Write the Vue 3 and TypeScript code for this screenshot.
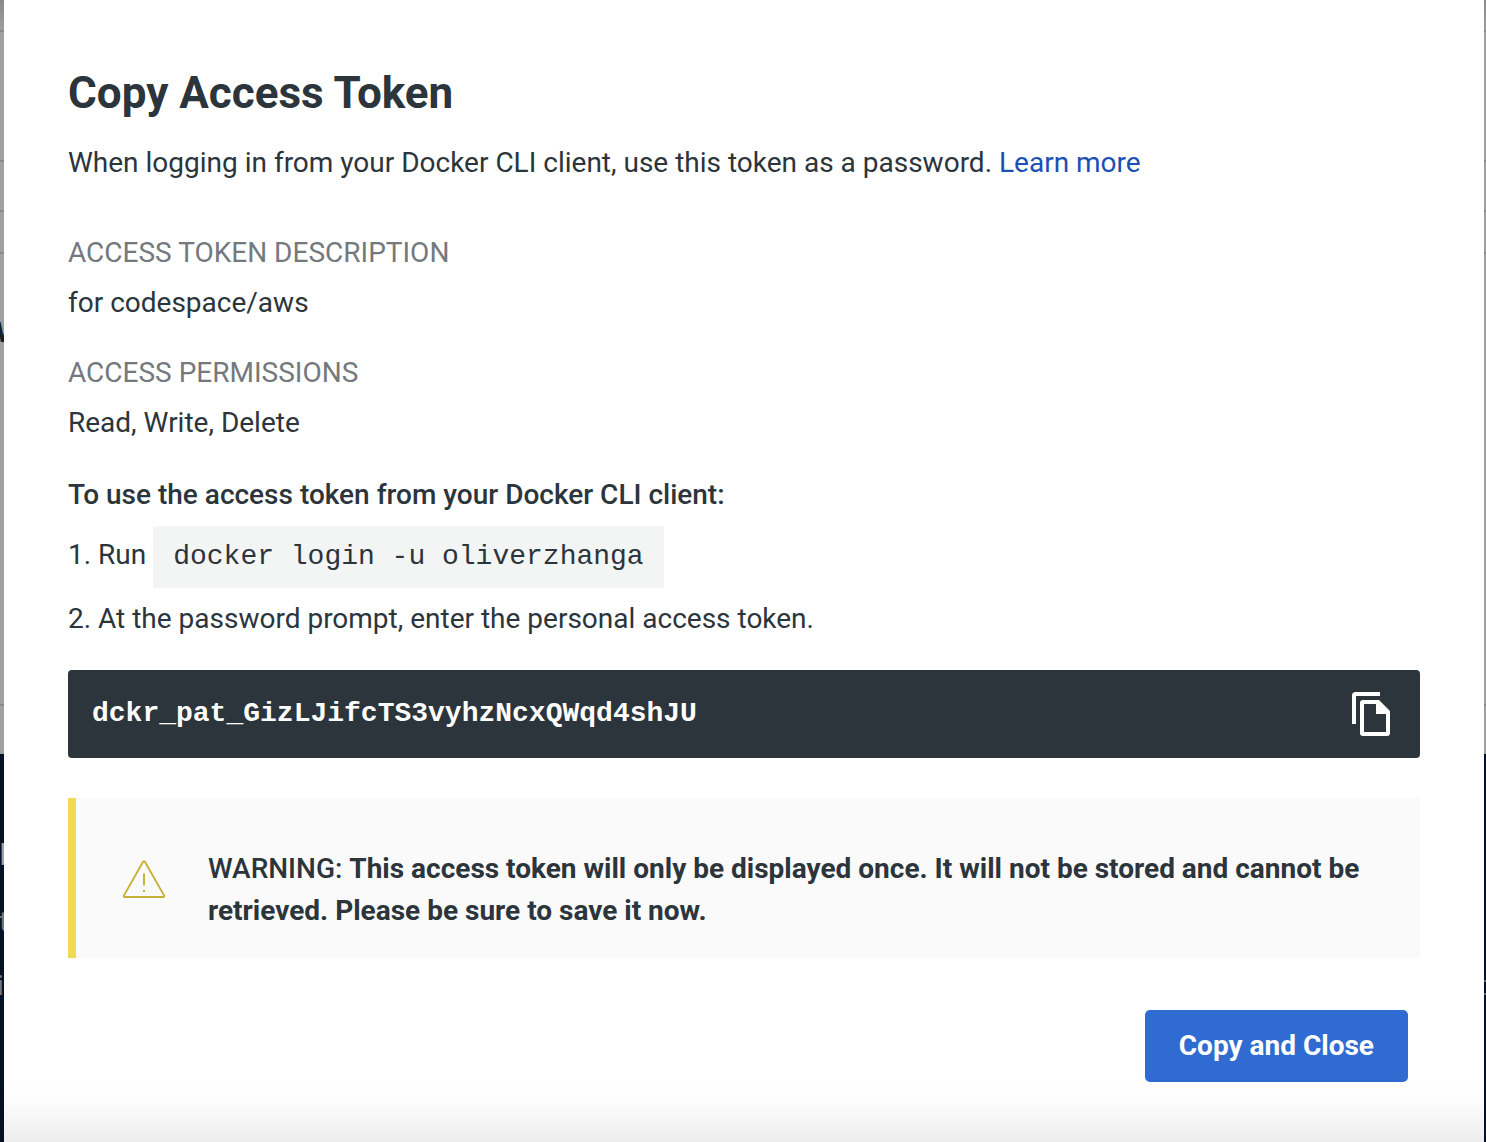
<script setup lang="ts">
import { ref } from 'vue'

interface Detail {
  label: string
  value: string
}

const details: Detail[] = [
  { label: 'ACCESS TOKEN DESCRIPTION', value: 'for codespace/aws' },
  { label: 'ACCESS PERMISSIONS', value: 'Read, Write, Delete' },
]
const command = 'docker login -u oliverzhanga'
const token = 'dckr_pat_GizLJifcTS3vyhzNcxQWqd4shJU'
const open = ref(true)

function copyToken(): void {
  navigator.clipboard?.writeText(token)
}

function copyAndClose(): void {
  copyToken()
  open.value = false
}
</script>

<template>
  <div class="app">
    <div class="page" aria-hidden="true">
      <div class="band band-bar"></div>
      <div class="band band-header"></div>
      <div class="band band-tabs"></div>
      <div class="band band-crumbs"></div>
      <div class="band band-body"><span class="page-title">W</span></div>
      <div class="page-end"></div>
      <div class="footer">
        <span class="foot foot-title">P</span>
        <span class="foot foot-first">t</span>
        <span class="foot foot-second">i</span>
        <span class="foot-box"></span>
      </div>
      <div class="shade"></div>
    </div>

    <div v-if="open" class="modal" role="dialog" aria-modal="true" aria-labelledby="modal-title">
      <h1 id="modal-title">Copy Access Token</h1>
      <p class="intro">
        When logging in from your Docker CLI client, use this token as a password.
        <a href="#learn-more">Learn more</a>
      </p>

      <dl class="details">
        <div v-for="item in details" :key="item.label" class="detail">
          <dt>{{ item.label }}</dt>
          <dd>{{ item.value }}</dd>
        </div>
      </dl>

      <h2>To use the access token from your Docker CLI client:</h2>
      <ol class="steps">
        <li>1. Run <code>{{ command }}</code></li>
        <li>2. At the password prompt, enter the personal access token.</li>
      </ol>

      <div class="token">
        <span class="token-text">{{ token }}</span>
        <button class="copy" type="button" aria-label="Copy token" @click="copyToken">
          <svg width="40" height="46" viewBox="0 0 40 46" aria-hidden="true">
            <path d="M29 3H4.500Q3 3 3 4.500V33" fill="none" stroke="#fff" stroke-width="4" />
            <path
              fill="#fff"
              fill-rule="evenodd"
              d="M12 9H28L39 20V42Q39 45 36 45H12Q9 45 9 42V12Q9 9 12 9ZM13 13V41H35V23H25V13Z"
            />
          </svg>
        </button>
      </div>

      <div class="warning" role="alert">
        <svg class="warning-icon" width="44" height="40" viewBox="0 0 44 40" aria-hidden="true">
          <path
            d="M22 2.500Q22.800 2.500 23.200 3.200L42 36.400Q42.500 38 41.500 38H2.500Q1.500 38 2 36.400L20.800 3.200Q21.200 2.500 22 2.500Z"
            fill="none"
            stroke="#c8b137"
            stroke-width="1.900"
            stroke-linejoin="round"
          />
          <path d="M22 14.500V26.500M22 31V33" fill="none" stroke="#c8b137" stroke-width="2" />
        </svg>
        <p>
          WARNING:
          <strong>This access token will only be displayed once. It will not be stored and cannot be retrieved. Please be sure to save it now.</strong>
        </p>
      </div>

      <div class="actions">
        <button class="primary" type="button" @click="copyAndClose">Copy and Close</button>
      </div>
    </div>
  </div>
</template>

<style>
body {
  margin: 0;
}
</style>

<style scoped>
.app {
  display: grid;
  min-height: 100vh;
  overflow: hidden;
  color: #2b353b;
  font-family: Roboto, "Liberation Sans", sans-serif;
  font-size: 28px;
  line-height: 42px;
}

.page,
.modal {
  grid-area: 1 / 1;
  box-sizing: border-box;
}

.page {
  position: relative;
  display: flex;
  flex-direction: column;
  overflow: hidden;
  background: #9f9f9e;
}

.band {
  border-bottom: 2px solid #8b8b8a;
}

.band-bar {
  height: 30px;
}

.band-header {
  height: 128px;
}

.band-tabs {
  height: 48px;
}

.band-crumbs {
  height: 40px;
}

.band-body {
  position: relative;
  height: 450px;
}

.page-end {
  height: 48px;
}

.footer {
  position: relative;
  flex: 1;
  background: #051127;
}

.page-title {
  position: absolute;
  top: 58px;
  left: -4px;
  color: #172226;
  font-weight: 700;
}

.foot {
  position: absolute;
  left: -1px;
  color: #73777d;
}

.foot-title {
  top: 79px;
  font-size: 32px;
  color: #9fa1a6;
}

.foot-first {
  top: 147px;
}

.foot-second {
  top: 211px;
  left: -3px;
}

.foot-box {
  position: absolute;
  top: 226px;
  right: 0;
  width: 2px;
  height: 11px;
  border: solid #5d6973;
  border-width: 2px 0;
}

.shade {
  position: absolute;
  inset: 0 0 auto;
  height: 32px;
  background: linear-gradient(rgba(0, 0, 0, 0.14), transparent);
}

.modal {
  z-index: 1;
  margin: 0 2px 0 4px;
  padding: 67px 64px 60px;
  background: linear-gradient(transparent, rgba(0, 0, 0, 0.02) 45%, rgba(0, 0, 0, 0.07)) bottom / 100% 60px no-repeat, #fff;
}

h1,
h2,
p,
dl,
dd,
ol {
  margin: 0;
  padding: 0;
}

h1 {
  font-size: 44px;
  font-weight: 700;
  line-height: 52px;
}

.intro {
  margin-top: 23px;
}

a {
  color: #1c4fb5;
  text-decoration: none;
}

.details {
  display: flex;
  flex-direction: column;
  gap: 28px;
  margin-top: 48px;
}

.detail {
  display: flex;
  flex-direction: column;
  gap: 8px;
}

dt {
  color: #73797d;
}

h2 {
  margin-top: 30px;
  font-size: 28px;
  font-weight: 500;
  line-height: 42px;
}

.steps {
  display: flex;
  flex-direction: column;
  gap: 10px;
  margin-top: 10px;
  list-style: none;
}

code {
  display: inline-block;
  padding: 10px 20px;
  background: #f3f4f4;
  font-family: "Liberation Mono", monospace;
  font-size: 28px;
}

.token {
  display: flex;
  align-items: center;
  justify-content: space-between;
  box-sizing: border-box;
  height: 88px;
  margin-top: 30px;
  padding: 0 29px 0 24px;
  border-radius: 4px;
  background: #2b353b;
}

.token-text {
  color: #fff;
  font-family: "Liberation Mono", monospace;
  font-weight: 700;
}

button {
  border: 0;
  font: inherit;
  cursor: pointer;
}

.copy {
  display: flex;
  padding: 0;
  background: none;
}

.warning {
  display: flex;
  align-items: center;
  gap: 42px;
  margin-top: 40px;
  padding: 50px 46px 26px;
  border-left: 8px solid #f2d954;
  background: #fafafa;
  font-weight: 500;
}

.warning-icon {
  flex: none;
  align-self: flex-start;
  margin-top: 11px;
}

strong {
  font-weight: 700;
}

.actions {
  display: flex;
  justify-content: flex-end;
  margin: 52px 12px 0 0;
}

.primary {
  height: 72px;
  padding: 0 34px;
  border-radius: 5px;
  background: #306bd1;
  color: #fff;
  font-weight: 700;
}
</style>
